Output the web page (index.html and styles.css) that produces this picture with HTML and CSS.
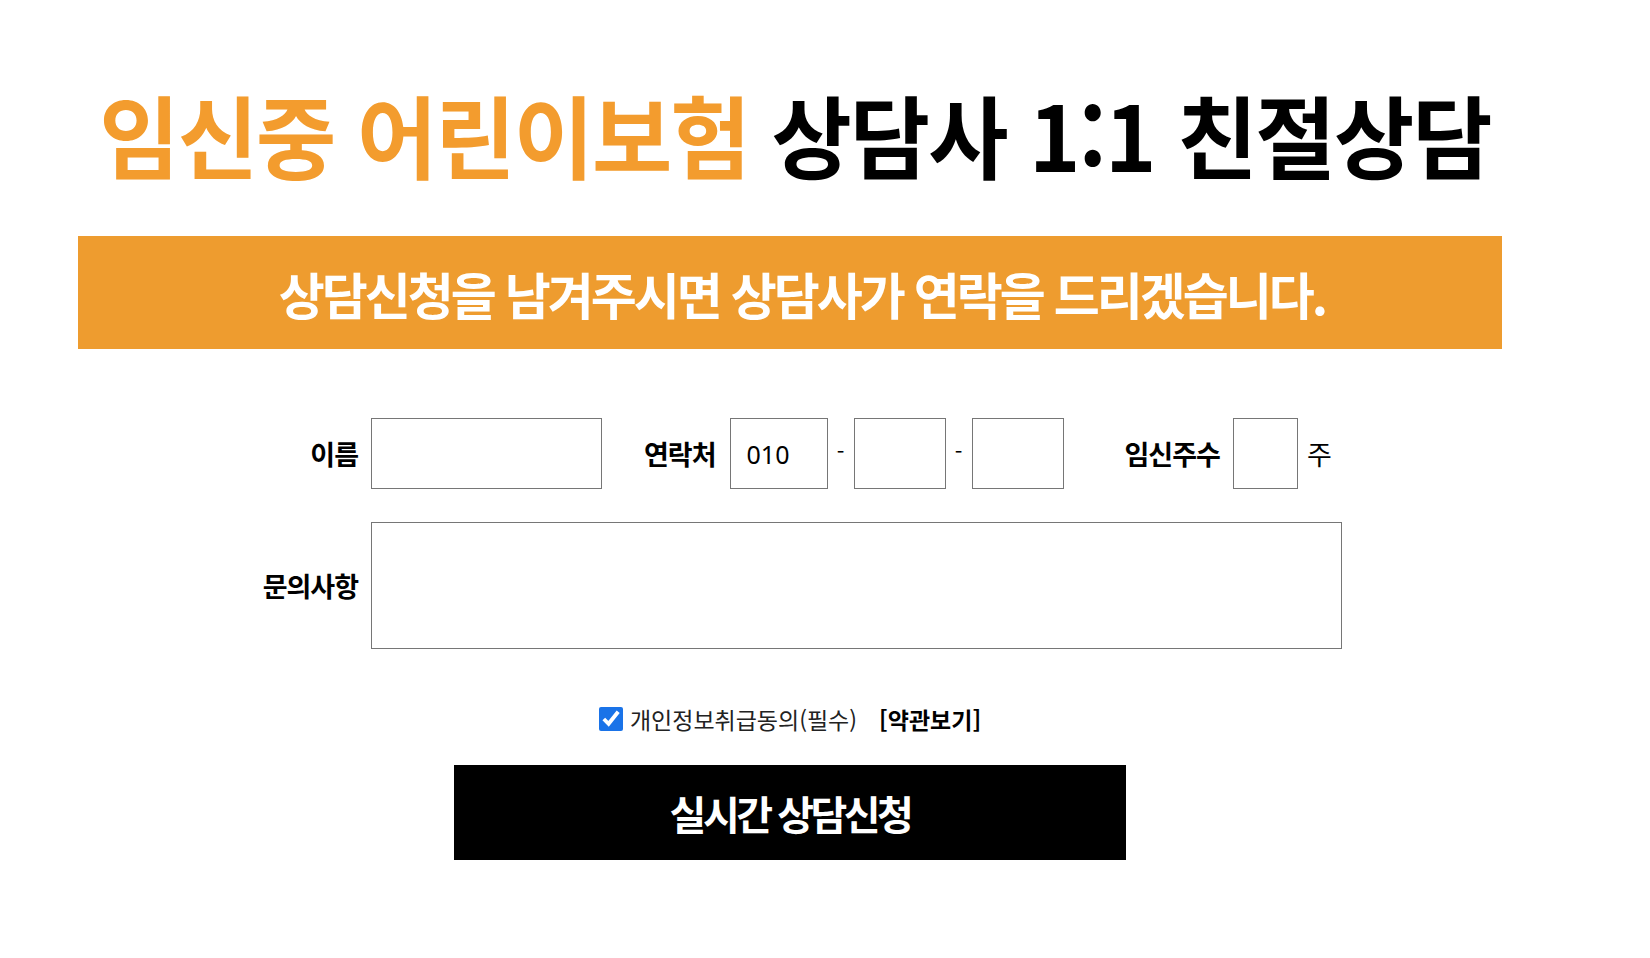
FILE: index.html
```html
<!DOCTYPE html>
<html lang="ko">
<head>
    <meta charset="UTF-8">
    <meta name="viewport" content="width=device-width, initial-scale=1.0">
    <title>임신중 어린이보험 상담</title>
    <link rel="stylesheet" href="styles.css">
</head>
<body>
    <div class="page">
        <h1 class="title"><span class="accent">임신중 어린이보험</span> 상담사 1:1 친절상담</h1>

        <div class="banner">상담신청을 남겨주시면 상담사가 연락을 드리겠습니다.</div>

        <form class="consult-form" onsubmit="return false;">
            <div class="row">
                <label class="label-col" for="name">이름</label>
                <input type="text" id="name" class="box name">

                <label class="label" for="tel1">연락처</label>
                <input type="text" id="tel1" class="box tel first" value="010">
                <span class="dash">-</span>
                <input type="text" id="tel2" class="box tel">
                <span class="dash">-</span>
                <input type="text" id="tel3" class="box tel">

                <label class="label weeks-label" for="weeks">임신주수</label>
                <input type="text" id="weeks" class="box weeks">
                <span class="unit">주</span>
            </div>

            <div class="row row-memo">
                <label class="label-col" for="memo">문의사항</label>
                <textarea id="memo" class="box memo"></textarea>
            </div>

            <div class="agree">
                <label class="agree-check">
                    <input type="checkbox" checked>
                    개인정보취급동의(필수)
                </label>
                <a href="#" class="terms">[약관보기]</a>
            </div>

            <button type="submit" class="submit">실시간 상담신청</button>
        </form>
    </div>
</body>
</html>
```

FILE: styles.css
```css
body {
    margin: 0;
    padding: 0;
    background: #fff;
    color: #000;
    font-family: "Noto Sans CJK KR", "Noto Sans", sans-serif;
}

.page {
    width: 1424px;
    margin-left: 78px;
    padding-top: 78px;
}

.title {
    margin: 0;
    font-size: 90px;
    line-height: 110px;
    font-weight: 700;
    letter-spacing: -2px;
    text-align: center;
    white-space: nowrap;
    transform: scaleX(0.97); /* headline is set in a condensed face */
}

.title .accent {
    color: #f39c2e; /* orange part of the headline */
}

.banner {
    margin-top: 48px;
    height: 113px;
    background-color: #ee9c2f;
    color: #fff;
    display: flex;
    align-items: center;
    justify-content: center;
    font-size: 50px;
    font-weight: 700;
    letter-spacing: -3px;
    padding-left: 24px;
    box-sizing: border-box;
}

.consult-form {
    margin-top: 69px;
    padding-left: 170px;
}

.row {
    display: flex;
    align-items: center;
}

.row-memo {
    margin-top: 33px;
}

.label-col,
.label {
    font-size: 27px;
    font-weight: 700;
    letter-spacing: -1px;
    color: #000;
}

.label-col {
    width: 110px;
    text-align: right;
    margin-right: 13px;
}

.label {
    margin-left: 42px;
    margin-right: 14px;
}

.weeks-label {
    margin-left: 61px;
    margin-right: 13px;
}

.box {
    box-sizing: border-box;
    height: 71px;
    border: 1px solid #767676;
    background: #fff;
    font-family: "Noto Sans", sans-serif;
    font-size: 25px;
    color: #000;
    padding: 0 16px;
    outline: none;
}

.name {
    width: 231px;
}

.tel {
    width: 92px;
}

.tel.first {
    width: 98px;
}

.dash {
    width: 26px;
    text-align: center;
    font-size: 22px;
    margin-top: -8px;
}

.weeks {
    width: 65px;
}

.unit {
    margin-left: 9px;
    font-size: 27px;
}

.memo {
    width: 971px;
    height: 127px;
    resize: none;
    padding: 12px 16px;
}

.agree {
    display: flex;
    justify-content: center;
    align-items: center;
    margin-top: 53px;
    margin-left: -170px;
    font-size: 23px;
}

.agree-check {
    display: flex;
    align-items: center;
    color: #222;
}

.agree-check input {
    width: 24px;
    height: 24px;
    margin: 0 7px 0 0;
    accent-color: #1a73e8;
}

.terms {
    margin-left: 22px;
    color: #000;
    font-weight: 700;
    text-decoration: none;
}

.submit {
    display: block;
    width: 672px;
    height: 95px;
    margin: 29px 0 0 206px;
    border: none;
    background: #000;
    color: #fff;
    font-family: "Noto Sans CJK KR", sans-serif;
    font-size: 40px;
    font-weight: 700;
    letter-spacing: -3.5px;
    cursor: pointer;
}
```
